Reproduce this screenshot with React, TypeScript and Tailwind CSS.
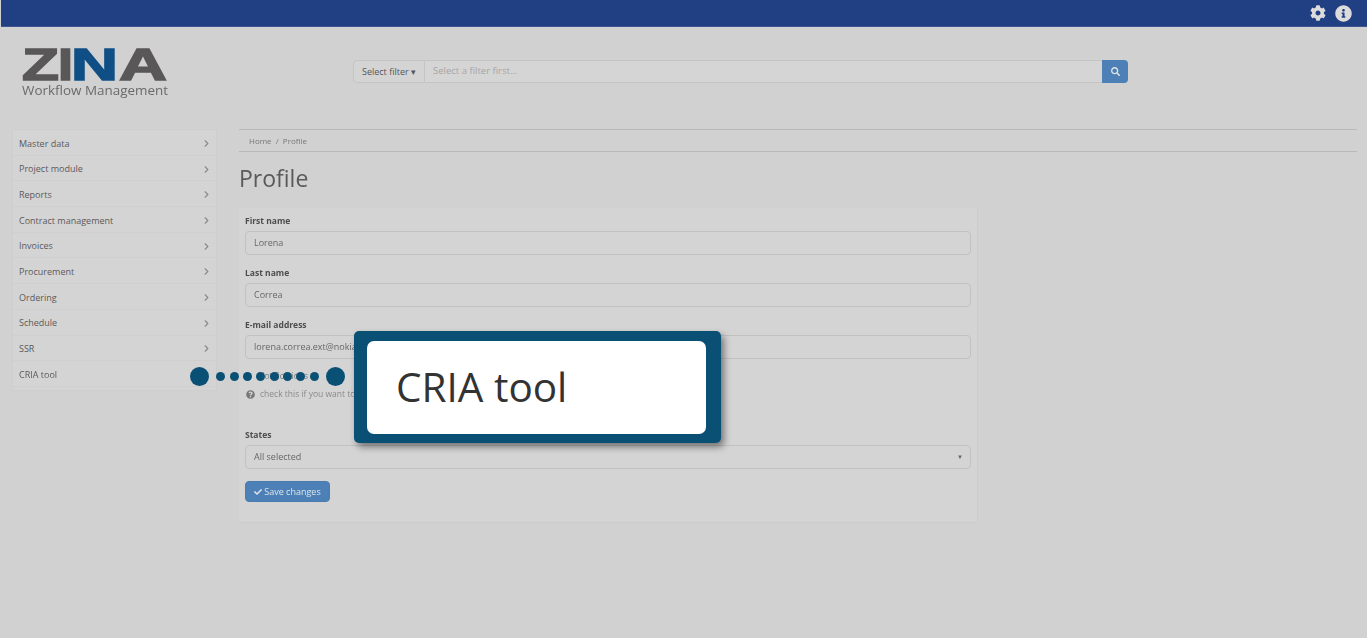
import { ChevronRight } from "lucide-react";
import { FaCheck, FaCog, FaInfoCircle, FaQuestionCircle, FaSearch } from "react-icons/fa";

const menu = [
  "Master data",
  "Project module",
  "Reports",
  "Contract management",
  "Invoices",
  "Procurement",
  "Ordering",
  "Schedule",
  "SSR",
  "CRIA tool",
];

const fields = [
  { label: "First name", value: "Lorena" },
  { label: "Last name", value: "Correa" },
  { label: "E-mail address", value: "lorena.correa.ext@nokia.com" },
];

function Logo() {
  return (
    <svg width="150" height="62" viewBox="0 0 150 62" className="block">
      <g fontFamily="'Liberation Sans', sans-serif" fontWeight="700" fontSize="44">
        <text x="0" y="40" textLength="37" lengthAdjust="spacingAndGlyphs" fill="#595757" stroke="#595757" strokeWidth="1.5">
          Z
        </text>
        <text x="36" y="40" textLength="15" lengthAdjust="spacingAndGlyphs" fill="#595757" stroke="#595757" strokeWidth="1.5">
          I
        </text>
        <text x="49" y="40" textLength="47" lengthAdjust="spacingAndGlyphs" fill="#0f4f85" stroke="#0f4f85" strokeWidth="1.5">
          N
        </text>
        <text x="97" y="40" textLength="48" lengthAdjust="spacingAndGlyphs" fill="#595757" stroke="#595757" strokeWidth="1.5">
          A
        </text>
      </g>
      <text x="0" y="55" fontFamily="'Open Sans', sans-serif" fontSize="13.5" textLength="146" lengthAdjust="spacingAndGlyphs" fill="#6a6a6a">
        Workflow Management
      </text>
    </svg>
  );
}

export default function App() {
  return (
    <div className="relative w-full h-[638px] overflow-hidden bg-[#d1d1d1] font-['Open_Sans',sans-serif] text-[#555]">
      <div className="blur-[0.7px]">
        <div className="h-[27px] bg-[#213f83] border-b border-[#3d5590] flex items-center justify-end gap-[9px] pr-[15px] ml-px">
          <FaCog size={16} className="text-[#dcdcdc]" />
          <FaInfoCircle size={17} className="text-[#dcdcdc]" />
        </div>

        <div className="flex h-[102px]">
          <div className="w-[353px] pl-[22px] pt-[13px] shrink-0">
            <Logo />
          </div>
          <div className="flex w-[775px] h-[23px] mt-[33px] text-[9px]">
            <div className="w-[72px] bg-[#d5d4d4] border border-[#c4c4c4] rounded-l-sm flex items-center justify-center text-[#555]">
              Select filter ▾
            </div>
            <div className="flex-1 bg-[#d6d5d5] border-y border-[#c4c4c4] flex items-center px-2 text-[9.5px] text-[#a5a5a5]">
              Select a filter first...
            </div>
            <div className="w-[26px] bg-[#4c80b6] rounded-r-sm flex items-center justify-center">
              <FaSearch size={9} className="text-[#e2e2e2]" />
            </div>
          </div>
        </div>

        <div className="flex pl-[12px] pr-[10px]">
          <div className="w-[205px] h-[262px] shrink-0 bg-[#d5d4d4] flex flex-col border border-[#cecece] mr-[22px]">
            {menu.map((item, i) => (
              <div
                key={item}
                className="h-[25.7px] flex items-center justify-between pl-[6px] pr-[4px] pt-[2px] border-b border-[#cfcfcf] text-[9px] text-[#5a5a5a]"
              >
                <span>{item}</span>
                {i < 9 && <ChevronRight size={11} strokeWidth={2.5} className="text-[#8a8a8a]" />}
              </div>
            ))}
          </div>

          <div className="flex-1">
            <div className="h-[23px] border-y border-[#b9b9b9] flex items-center pl-[10px] text-[8px] text-[#777]">
              Home&nbsp;&nbsp;/&nbsp;&nbsp;Profile
            </div>
            <h1 className="text-[23px] leading-none text-[#5a5a5a] mt-[15px] mb-[18px]">Profile</h1>

            <div className="w-[739px] h-[315px] bg-[#d5d4d4] border-r border-b border-[#cdcdcd] px-[6px] pt-[4px]">
              {fields.map((f) => (
                <div key={f.label} className="mb-[9px]">
                  <div className="text-[8.5px] font-bold leading-[17px] mb-[2px] text-[#4d4d4d]">{f.label}</div>
                  <div className="h-[24px] border border-[#c1c1c1] rounded-sm flex items-center pl-[8px] text-[9px] text-[#666]">
                    {f.value}
                  </div>
                </div>
              ))}

              <div className="h-[16px] mt-[9px] pl-[13px] text-[8.5px] leading-[16px] text-[#777]">Notifications</div>
              <div className="flex items-center gap-[5px] h-[12px] mt-[4px] text-[8.5px] text-[#8a8a8a]">
                <FaQuestionCircle size={9} className="text-[#777] ml-px" />
                <span>check this if you want to receive notifications</span>
              </div>

              <div className="text-[8.5px] font-bold leading-[17px] mb-[2px] text-[#4d4d4d] mt-[26px]">States</div>
              <div className="h-[24px] border border-[#c1c1c1] rounded-sm flex items-center justify-between pl-[8px] pr-[7px] text-[9px] text-[#666]">
                <span>All selected</span>
                <span className="text-[6px] text-[#666]">▼</span>
              </div>

              <div className="w-[85px] h-[21px] mt-[12px] bg-[#4c80b6] border border-[#4a7cb0] rounded-sm flex items-center justify-center gap-[2px] text-[9px] text-[#dfe5ea]">
                <FaCheck size={8} />
                <span>Save changes</span>
              </div>
            </div>
          </div>
        </div>
      </div>

      {/* pointer from the menu entry to the callout */}
      <div className="absolute left-[190px] top-[367px] w-[155px] h-[19px] flex items-center justify-between">
        <div className="size-[19px] rounded-full bg-[#0a5075]" />
        <div className="flex gap-[4.4px]">
          {[0, 1, 2, 3, 4, 5, 6, 7].map((n) => (
            <div key={n} className="size-[9px] rounded-full bg-[#0a5075]" />
          ))}
        </div>
        <div className="size-[19px] rounded-full bg-[#0a5075]" />
      </div>

      <div className="absolute left-[354px] top-[331px] w-[367px] h-[112px] bg-[#0a5075] rounded-[5px] shadow-[3px_4px_7px_rgba(0,0,0,0.45)] pl-[13px] pr-[15px] pt-[10px] pb-[9px]">
        <div className="w-full h-full bg-white rounded-[7px] flex items-center pl-[29px] pb-px text-[40.5px] leading-none text-[#333]">
          CRIA tool
        </div>
      </div>
    </div>
  );
}
